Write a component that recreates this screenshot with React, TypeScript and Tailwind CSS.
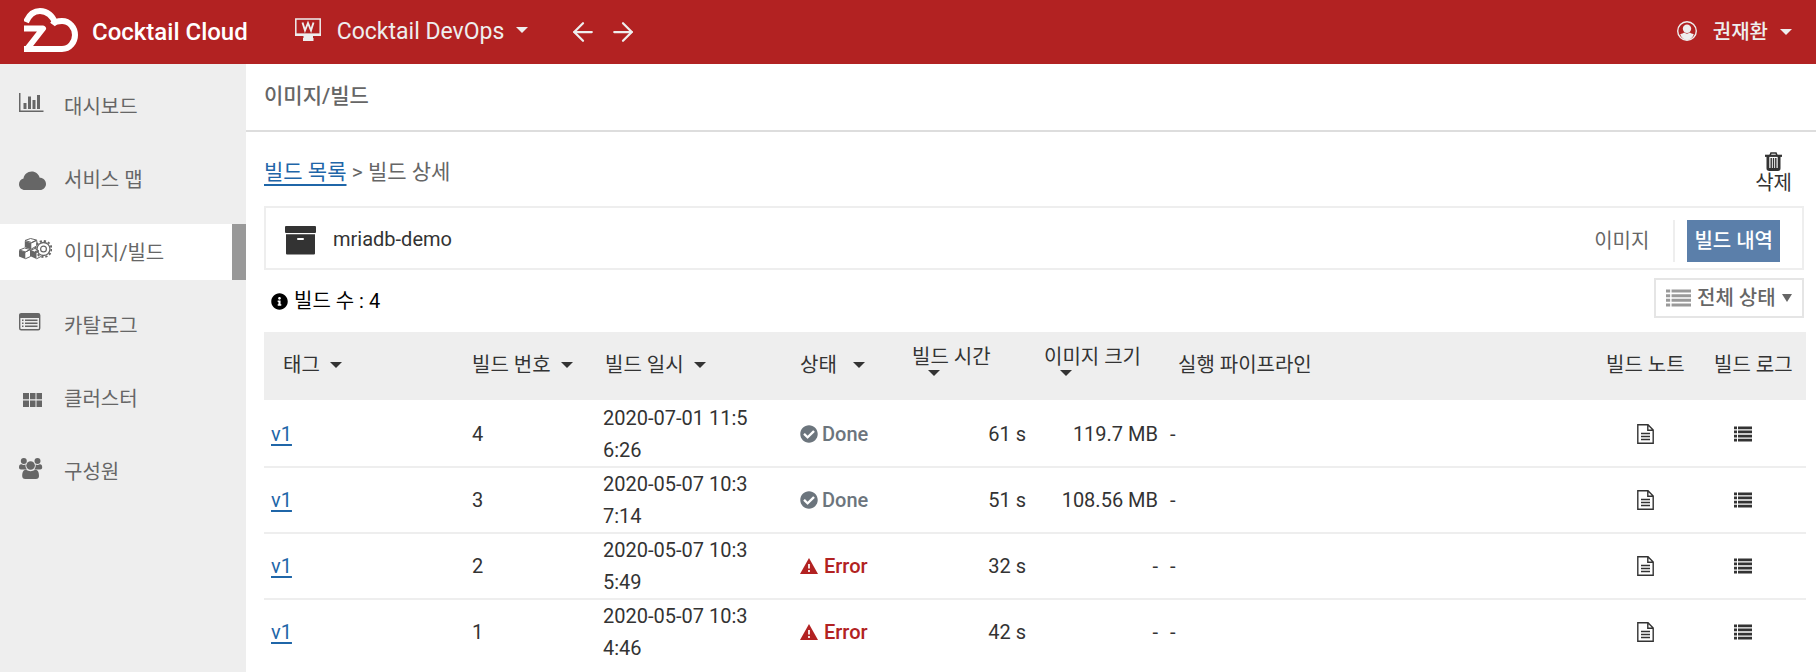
import type { ReactNode } from "react";
import { ArrowLeft, ArrowRight } from "lucide-react";
import { FaCheckCircle, FaInfoCircle } from "react-icons/fa";

function Logo() {
  return (
    <svg width="54" height="44" viewBox="0 0 54 44" fill="none" stroke="#fff" strokeWidth="6" className="mb-1" aria-hidden="true">
      <path d="M2 14C5 7 10 3 16 3C23 3 29 8 31 15" />
      <path d="M28.500 16.500C30 14.500 34 13 38 13C45.500 13 51 19.500 51 27C51 34.500 45.500 41 38 41H3L19 20.500H0" strokeLinejoin="round" />
      <path d="M0 41H8" />
    </svg>
  );
}

function Monitor() {
  return (
    <svg width="26" height="24" viewBox="0 0 26 24" className="mb-1" aria-hidden="true">
      <rect x="0.8" y="1" width="24.400" height="15.500" fill="none" stroke="#eee" strokeWidth="1.500" />
      <path d="M0 15.500H26V18H18V20H18.500V23H8V20H8.500V18H0Z" fill="#eee" />
      <path d="M7.500 4.500L10 12.500L13 5L16 12.500L18.500 4.500" fill="none" stroke="#eee" strokeWidth="1.900" />
    </svg>
  );
}

function UserIcon() {
  return (
    <svg width="20" height="20" viewBox="0 0 20 20" className="mb-0.5" aria-hidden="true">
      <circle cx="10" cy="10" r="9.300" fill="none" stroke="#eee" strokeWidth="1.400" />
      <circle cx="10" cy="7.800" r="4.200" fill="#eee" />
      <path d="M3.200 13.200C5 12.500 6.200 12.300 7.200 11.500C8.800 13 11.200 13 12.800 11.500C13.800 12.300 15 12.500 16.800 13.200C15.500 17 13 19 10 19C7 19 4.500 17 3.200 13.200Z" fill="#eee" />
    </svg>
  );
}

function Caret({ className = "" }: { className?: string }) {
  return (
    <svg width="12" height="6" viewBox="0 0 12 6" className={`shrink-0 ${className}`} aria-hidden="true">
      <path d="M0 0H12L6 6Z" fill="currentColor" />
    </svg>
  );
}

function MenuGlyph({ children }: { children: ReactNode }) {
  return (
    <svg width="34" height="28" viewBox="0 0 34 28" fill="currentColor" className="shrink-0" aria-hidden="true">
      {children}
    </svg>
  );
}

const menu = [
  {
    label: "대시보드",
    icon: (
      <path d="M1 1H2.500V18.500H25.500V20H1ZM5.500 11H8.500V17H5.500ZM10 4.500H13V17H10ZM14.500 8H17.500V17H14.500ZM19 3H22V17H19Z" />
    ),
  },
  {
    label: "서비스 맵",
    icon: (
      <path d="M7 25C3.500 25 1 22.500 1 19.200C1 16.500 2.800 14.300 5.500 13.600C6 9.500 9.500 6.500 13.700 6.500C17.500 6.500 20.800 9 21.700 12.800C25.200 12.800 28 15.500 28 19C28 22.300 25.300 25 22 25Z" />
    ),
  },
  {
    label: "이미지/빌드",
    active: true,
    icon: (
      <g>
        <path d="M7 2.500L12.500 0.500L18.500 2L13.500 4.500Z" fill="none" stroke="currentColor" />
        <path d="M6.800 3L13.300 5V11.500L6.800 9.200Z" />
        <path d="M13.300 5L18.800 2.500V8L13.300 11" fill="none" stroke="currentColor" />
        <path d="M1.500 12L6.500 10L12 11.500L7.500 14Z" fill="none" stroke="currentColor" />
        <path d="M1 12.200L7.300 14V21L1 18.500Z" />
        <path d="M7.300 14L12.500 11.500V18.500L7.300 20.800" fill="none" stroke="currentColor" />
        <path d="M13 12L18.500 14.500V21L13 18.500Z" />
        <path d="M13 12L17 10.500L21 13L18.500 14.500M18.500 20.800L23 18.500" fill="none" stroke="currentColor" />
        <circle cx="25.500" cy="11" r="6.500" fill="none" stroke="currentColor" strokeWidth="1.300" />
        <circle cx="25.500" cy="11" r="8" fill="none" stroke="currentColor" strokeWidth="1.900" strokeDasharray="2.200 2" />
        <circle cx="25.500" cy="11" r="2.900" fill="none" stroke="currentColor" strokeWidth="1.200" />
      </g>
    ),
  },
  {
    label: "카탈로그",
    icon: (
      <g>
        <rect x="1.700" y="2.700" width="20" height="16" rx="1.500" fill="none" stroke="currentColor" strokeWidth="1.400" />
        <path d="M1.500 3H22V7H1.500ZM4 8.500H5.500V10H4ZM4 11.500H5.500V13H4ZM4 14.500H5.500V16H4ZM7 8.500H19.500V10H7ZM7 11.500H19.500V13H7ZM7 14.500H19.500V16H7Z" />
      </g>
    ),
  },
  {
    label: "클러스터",
    icon: (
      <path d="M5 9H11V15.300H5ZM12 9H17.500V15.300H12ZM18.500 9H24V15.300H18.500ZM5 16.500H11V23H5ZM12 16.500H17.500V23H12ZM18.500 16.500H24V23H18.500Z" />
    ),
  },
  {
    label: "구성원",
    icon: (
      <g>
        <circle cx="5.800" cy="4" r="3" />
        <circle cx="19.500" cy="4" r="3" />
        <path d="M1 10.500C1 8 2 7 3.500 7.200C5 8.200 6.500 8 7.500 7.500C7.300 9.500 7.800 11 9 12.500H3C1.800 12.500 1 11.800 1 10.500Z" />
        <path d="M24.200 10.500C24.200 8 23.200 7 21.700 7.200C20.200 8.200 18.700 8 17.700 7.500C17.900 9.500 17.400 11 16.200 12.500H22.200C23.400 12.500 24.200 11.800 24.200 10.500Z" />
        <circle cx="12.600" cy="8.500" r="4.300" />
        <path d="M4.200 19C4.200 15.500 5.200 12.800 8 12.800C9.500 13.700 11 14.200 12.600 14.200C14.200 14.200 15.700 13.700 17.200 12.800C20 12.800 21 15.500 21 19C21 21 19.800 22 18 22H7.200C5.400 22 4.200 21 4.200 19Z" />
      </g>
    ),
  },
];

function TrashIcon() {
  return (
    <svg width="17" height="19" viewBox="0 0 17 19" fill="none" stroke="currentColor" className="shrink-0" aria-hidden="true">
      <path d="M0 3.800H17" strokeWidth="2.200" />
      <path d="M5 3.500L6 1H11L12 3.500" strokeWidth="1.600" />
      <path d="M2.900 4V16.200Q2.900 17.500 4.200 17.500H12.800Q14.100 17.500 14.100 16.200V4" strokeWidth="2.800" />
      <path d="M6.200 6V16M8.500 6V16M10.800 6V16" strokeWidth="1.400" />
    </svg>
  );
}

function ArchiveIcon() {
  return (
    <svg width="31" height="29" viewBox="0 0 31 29" fill="currentColor" className="mt-1" aria-hidden="true">
      <rect width="31" height="7" rx="1" />
      <path fillRule="evenodd" d="M1 8.200H30V27.500Q30 28.500 29 28.500H2Q1 28.500 1 27.500ZM13 12Q12 12 12 13Q12 14 13 14H18Q19 14 19 13Q19 12 18 12Z" />
    </svg>
  );
}

function DocIcon() {
  return (
    <svg width="17" height="20" viewBox="0 0 17 20" fill="none" stroke="currentColor" strokeWidth="1.400" aria-hidden="true">
      <path d="M0.800 0.800H11L16.200 6V19.200H0.800ZM10.800 0.800V6.300H16.200" />
      <path d="M4 9.500H13M4 12.500H13M4 15.500H13" strokeWidth="1.300" />
    </svg>
  );
}

function ListIcon({ className = "" }: { className?: string }) {
  return (
    <svg viewBox="0 0 18 16" preserveAspectRatio="none" fill="currentColor" className={`shrink-0 ${className}`} aria-hidden="true">
      <path d="M0 0.500H3V3.200H0ZM4 0.500H18V3.200H4ZM0 4.600H3V7.300H0ZM4 4.600H18V7.300H4ZM0 8.700H3V11.400H0ZM4 8.700H18V11.400H4ZM0 12.800H3V15.500H0ZM4 12.800H18V15.500H4Z" />
    </svg>
  );
}

function WarningIcon() {
  return (
    <svg width="18" height="16" viewBox="0 0 18 16" aria-hidden="true">
      <path d="M9 0L18 16H0Z" fill="currentColor" />
      <path d="M9 6V10.500M9 12V14" stroke="#fff" strokeWidth="1.700" />
    </svg>
  );
}

const builds = [
  { tag: "v1", no: 4, at: "2020-07-01 11:56:26", ok: true, time: "61 s", size: "119.7 MB" },
  { tag: "v1", no: 3, at: "2020-05-07 10:37:14", ok: true, time: "51 s", size: "108.56 MB" },
  { tag: "v1", no: 2, at: "2020-05-07 10:35:49", ok: false, time: "32 s", size: "-" },
  { tag: "v1", no: 1, at: "2020-05-07 10:34:46", ok: false, time: "42 s", size: "-" },
];

function SortButton({ label, gap = "gap-2.5" }: { label: string; gap?: string }) {
  return (
    <button type="button" className={`flex items-center whitespace-nowrap ${gap}`}>
      {label}
      <Caret />
    </button>
  );
}

function StackedSortButton({ label }: { label: string }) {
  return (
    <button type="button" className="flex flex-col items-start pb-2.5 whitespace-nowrap leading-[26px]">
      {label}
      <Caret className="ml-4" />
    </button>
  );
}

export default function App() {
  return (
    <div className="flex min-h-screen flex-col bg-white font-['Roboto','Noto_Sans_CJK_KR',sans-serif] text-[20px] leading-8 text-[#333]">
      <header className="flex h-16 shrink-0 items-center bg-[#b22222] text-[#eee]">
        <div className="flex items-center gap-3.5 pl-6 text-[24px] font-medium text-white">
          <Logo />
          <span>Cocktail Cloud</span>
        </div>
        <button type="button" className="ml-[47px] flex items-center gap-4 text-[23px]">
          <Monitor />
          <span>Cocktail DevOps</span>
          <Caret className="mb-1 -ml-1" />
        </button>
        <nav aria-label="history" className="ml-10 flex gap-2.5">
          <button type="button" aria-label="back">
            <ArrowLeft size={30} strokeWidth={1.8} />
          </button>
          <button type="button" aria-label="forward">
            <ArrowRight size={30} strokeWidth={1.8} />
          </button>
        </nav>
        <button type="button" className="mr-6 ml-auto flex items-center font-medium">
          <UserIcon />
          <span className="mr-3 ml-4">권재환</span>
          <Caret />
        </button>
      </header>

      <div className="flex grow">
        <nav aria-label="main" className="w-[246px] shrink-0 bg-[#eee] pt-3.5 text-[#666]">
          <ul className="flex flex-col gap-[17px]">
            {menu.map((item) => (
              <li key={item.label}>
                <a
                  href="#"
                  className={`flex h-14 items-center gap-3 pl-[18px] ${item.active ? "border-r-[14px] border-[#999] bg-white" : ""}`}
                >
                  <MenuGlyph>{item.icon}</MenuGlyph>
                  <span className="pt-0.5">{item.label}</span>
                </a>
              </li>
            ))}
          </ul>
        </nav>

        <main className="min-w-0 grow">
          <h1 className="border-b-2 border-[#ddd] pt-4 pb-[18px] pl-[18px] text-[21px] font-medium text-[#666]">
            이미지/빌드
          </h1>

          <div className="pt-5 pr-3 pl-[18px]">
            <div className="flex h-[54px] items-start justify-between">
              <p className="pt-1 text-[21px] text-[#666]">
                <a href="#" className="text-[#1f66a8] underline decoration-2 underline-offset-[5px]">
                  빌드 목록
                </a>{" "}
                &gt; 빌드 상세
              </p>
              <button type="button" className="mr-3 flex flex-col items-center">
                <TrashIcon />
                <span className="leading-6">삭제</span>
              </button>
            </div>

            <section className="flex h-16 items-center border-2 border-[#eee] pr-[22px] pl-[19px]">
              <ArchiveIcon />
              <h2 className="ml-[17px] grow pt-0.5">mriadb-demo</h2>
              <div className="mb-1.5 flex h-[42px] items-stretch self-end">
                <button type="button" className="border-r-2 border-[#eee] pr-6 text-[#666]">
                  이미지
                </button>
                <button type="button" className="ml-3 bg-[#5b7faa] px-[7px] font-medium text-white">
                  빌드 내역
                </button>
              </div>
            </section>

            <div className="flex h-[62px] items-start justify-between pt-2">
              <p className="flex items-center gap-1.5 pt-[7px] pl-[7px] text-black">
                <FaInfoCircle size={17} />
                빌드 수 : 4
              </p>
              <label className="flex h-10 items-center gap-1.5 border-2 border-[#e5e5e5] px-2.5 text-[#666]">
                <ListIcon className="h-[18px] w-[25px] text-[#999]" />
                <select aria-label="상태" className="appearance-none font-medium">
                  <option>전체 상태</option>
                </select>
                <svg width="10" height="8" viewBox="0 0 10 8" aria-hidden="true">
                  <path d="M0 0H10L5 8Z" fill="currentColor" />
                </svg>
              </label>
            </div>
          </div>

          <div className="pr-2.5 pl-[18px]">
            <table className="w-full table-fixed border-separate border-spacing-0 text-left">
              <colgroup>
                <col className="w-[200px]" />
                <col className="w-[131px]" />
                <col className="w-[197px]" />
                <col className="w-[112px]" />
                <col className="w-[130px]" />
                <col className="w-[132px]" />
                <col />
                <col className="w-[108px]" />
                <col className="w-[100px]" />
              </colgroup>
              <thead className="whitespace-nowrap">
                <tr className="h-[70px] *:border-b-2 *:border-white *:bg-[#eee] *:pb-0.5 *:font-normal">
                  <th className="pl-[19px]"><SortButton label="태그" /></th>
                  <th className="pl-2"><SortButton label="빌드 번호" /></th>
                  <th className="pl-2.5"><SortButton label="빌드 일시" /></th>
                  <th className="pl-2"><SortButton label="상태" gap="gap-4" /></th>
                  <th className="pl-2"><StackedSortButton label="빌드 시간" /></th>
                  <th className="pl-2.5"><StackedSortButton label="이미지 크기" /></th>
                  <th className="pl-3">실행 파이프라인</th>
                  <th className="pl-2">빌드 노트</th>
                  <th className="pl-2">빌드 로그</th>
                </tr>
              </thead>
              <tbody className="[&>tr:not(:last-child)>td]:border-b-2 [&>tr>td]:border-[#eee]">
                {builds.map((b) => (
                  <tr key={b.no}>
                    <td className="pl-[7px]">
                      <a href="#" className="text-[#1f66a8] underline decoration-2 underline-offset-[3px]">{b.tag}</a>
                    </td>
                    <td className="pl-2">{b.no}</td>
                    <td className="pr-10 pl-2 break-all">{b.at}</td>
                    <td className="pl-2 font-medium">
                      {b.ok ? (
                        <span className="flex items-center gap-1 text-[#6c757d]"><FaCheckCircle size={18} />Done</span>
                      ) : (
                        <span className="flex items-center gap-1.5 text-[#b22222]"><WarningIcon />Error</span>
                      )}
                    </td>
                    <td className="pr-2 text-right">{b.time}</td>
                    <td className="pr-2 text-right">{b.size}</td>
                    <td className="pl-1">-</td>
                    <td>
                      <button type="button" aria-label="빌드 노트" className="ml-[39px] block"><DocIcon /></button>
                    </td>
                    <td>
                      <button type="button" aria-label="빌드 로그" className="ml-7 block"><ListIcon className="h-4 w-[18px]" /></button>
                    </td>
                  </tr>
                ))}
              </tbody>
            </table>
          </div>
        </main>
      </div>
    </div>
  );
}
